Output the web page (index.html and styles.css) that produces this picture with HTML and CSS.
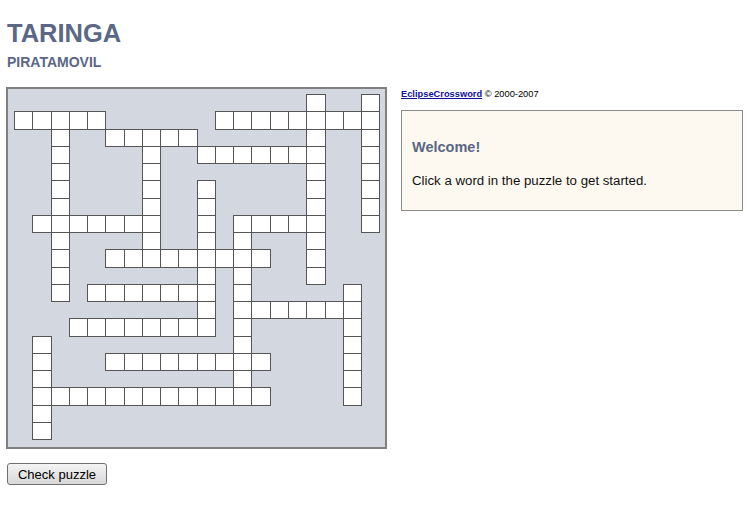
FILE: index.html
```html
<!DOCTYPE html>
<html lang="en">
<head>
    <meta charset="UTF-8">
    <title>TARINGA - PIRATAMOVIL</title>
    <link rel="stylesheet" href="styles.css">
</head>
<body>
    <div class="page">
        <h1 class="title">TARINGA</h1>
        <h2 class="subtitle">PIRATAMOVIL</h2>

        <div class="main">
            <div class="board">
                <div class="grid" id="grid"></div>
            </div>

            <div class="side">
                <div class="credits">
                    <a href="#">EclipseCrossword</a> &copy; 2000-2007
                </div>
                <div class="welcome">
                    <h3>Welcome!</h3>
                    <p>Click a word in the puzzle to get started.</p>
                </div>
            </div>
        </div>

        <button type="button" class="check-btn">Check puzzle</button>
    </div>

    <script>
        const layout = [
            '................#..#',
            '#####......#########',
            '..#..#####......#..#',
            '..#....#..#######..#',
            '..#....#........#..#',
            '..#....#..#.....#..#',
            '..#....#..#.....#..#',
            '.#######..#.#####..#',
            '..#....#..#.#...#...',
            '..#..#########..#...',
            '..#.......#.#...#...',
            '..#.#######.#.....#.',
            '..........#.#######.',
            '...########.#.....#.',
            '.#..........#.....#.',
            '.#...#########....#.',
            '.#..........#.....#.',
            '.#############....#.',
            '.#..................',
            '.#..................'
        ];

        const grid = document.getElementById('grid');
        grid.innerHTML = layout.map(row =>
            row.split('').map(ch => ch === '#' ? '<div class="box"></div>' : '<div class="gap"></div>').join('')
        ).join('');
    </script>
</body>
</html>
```

FILE: styles.css
```css
* {
    margin: 0;
    padding: 0;
    box-sizing: border-box;
}

body {
    font-family: 'Liberation Sans', Arial, sans-serif;
    background: #fff;
    color: #000;
}

.page {
    padding: 18px 0 0 6px;
}

.title {
    font-size: 25.5px;
    line-height: 30px;
    font-weight: bold;
    color: #5a6786;
    padding-left: 1px;
}

.subtitle {
    margin-top: 6px;
    font-size: 14px;
    line-height: 17px;
    font-weight: bold;
    color: #5a6786;
    padding-left: 1px;
}

.main {
    display: flex;
    align-items: flex-start;
    margin-top: 16px;
}

.board {
    width: 381px;
    height: 362px;
    border: 2px solid #808080;
    background: #d3d8e0;
    padding: 5px 0 0 6px;
    flex-shrink: 0;
}

.grid {
    display: grid;
    grid-template-columns: repeat(20, 18.28px);
    grid-template-rows: repeat(20, 17.26px);
}

.box {
    width: 19.28px;
    height: 18.26px;
    background: #fff;
    border: 1px solid #555;
}

.side {
    margin-left: 14px;
    padding-top: 2px;
    width: 342px;
}

.credits {
    font-size: 9.3px;
    line-height: 11px;
    color: #000;
}

.credits a {
    color: #1010a0;
    font-weight: bold;
    text-decoration: underline;
}

.welcome {
    margin-top: 10px;
    border: 1px solid #8c8c8c;
    background: #fdf9f0;
    padding: 27px 10px 21px 10px;
}

.welcome h3 {
    font-size: 14.5px;
    line-height: 18px;
    font-weight: bold;
    color: #5a6786;
}

.welcome p {
    margin-top: 17px;
    font-size: 13.25px;
    line-height: 16px;
    color: #111;
}

.check-btn {
    display: block;
    margin: 14px 0 0 1px;
    width: 100px;
    height: 22px;
    font-family: 'Liberation Sans', Arial, sans-serif;
    font-size: 13px;
    color: #000;
    background: linear-gradient(#f4f4f4 0%, #e6e6e6 50%, #d8d8d8 100%);
    border: 1px solid #707070;
    border-radius: 3px;
    cursor: pointer;
}
```
